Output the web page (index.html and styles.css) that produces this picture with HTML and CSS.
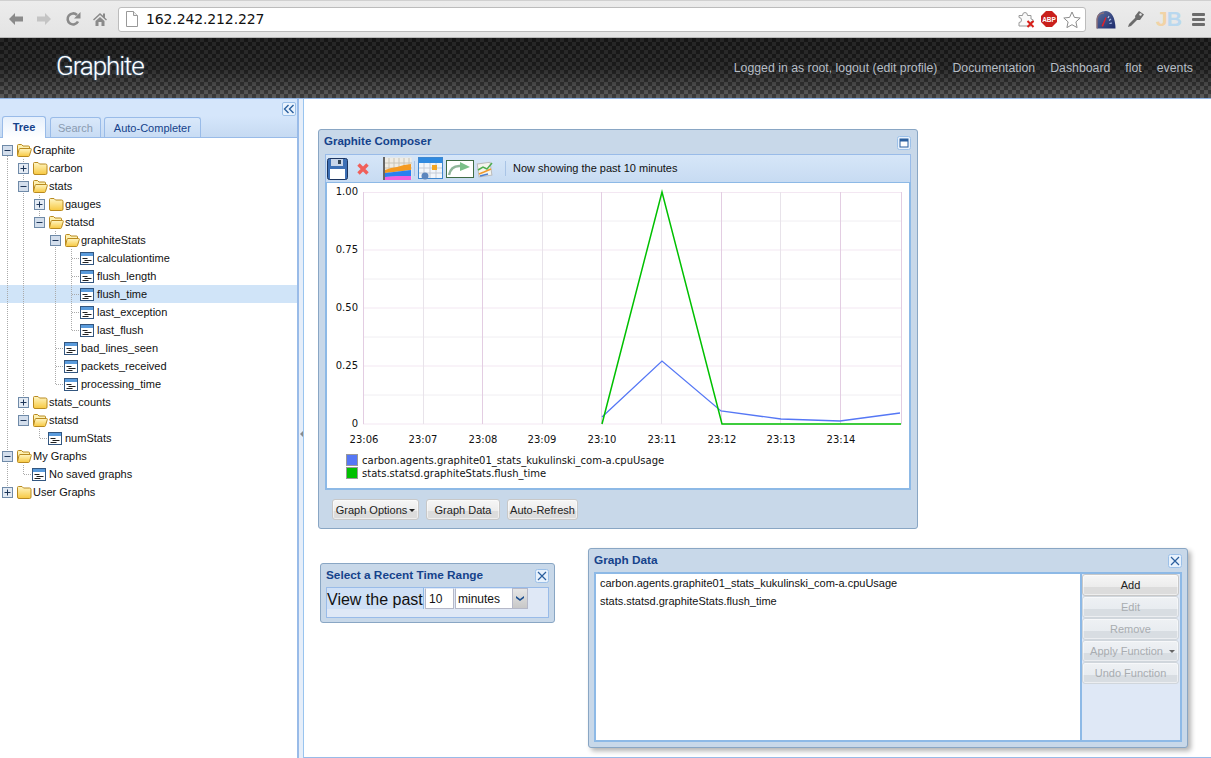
FILE: index.html
```html
<!DOCTYPE html>
<html lang="en">
<head>
<meta charset="utf-8">
<title>Graphite</title>
<link rel="stylesheet" href="styles.css">
</head>
<body>
<svg class="defs" width="0" height="0">
  <defs>
    <linearGradient id="fold" x1="0" y1="0" x2="0" y2="1"><stop offset="0" stop-color="#fff6c4"/><stop offset="1" stop-color="#f7c840"/></linearGradient>
    <linearGradient id="dial" x1="0" y1="0" x2="1" y2="1"><stop offset="0" stop-color="#5d6f9e"/><stop offset="1" stop-color="#1b2a6b"/></linearGradient>
    <symbol id="closed" viewBox="0 0 16 16"><path d="M1.500 13V3.500q0-1 1-1h3.500l1.500 1.500h6q1.500 0 1.500 1.500V13q0 1.500-1.500 1.500H3q-1.500 0-1.500-1.500z" fill="url(#fold)" stroke="#b98a20"/></symbol>
    <symbol id="open" viewBox="0 0 16 16"><path d="M1.500 13V3.500q0-1 1-1h3l1.500 1.500h5.500q1 0 1 1V7" fill="#fdf0b0" stroke="#b98a20"/><path d="M1.500 13.500L3 7.500q.3-1 1-1h10.500q1 0 .8 1L13.500 13.500q-.3 1-1 1H2.500q-1 0-1-1z" fill="url(#fold)" stroke="#b98a20"/></symbol>
    <symbol id="leaf" viewBox="0 0 16 16"><rect x=".5" y="2.500" width="13" height="12" fill="#fff" stroke="#33567f"/><rect x="1" y="3" width="12" height="3" fill="#5a9bdc"/><path d="M2.500 8.500h5M4.500 10.500h7M2.500 12.500h6" stroke="#222" fill="none"/></symbol>
    <symbol id="plus" viewBox="0 0 11 11"><rect x=".5" y=".5" width="10" height="10" fill="#e4ebf4" stroke="#6f8aa8"/><path d="M2.500 5.500h6M5.500 2.500v6" stroke="#1d3558"/></symbol>
    <symbol id="minus" viewBox="0 0 11 11"><rect x=".5" y=".5" width="10" height="10" fill="#d3deec" stroke="#6f8aa8"/><path d="M2.500 5.500h6" stroke="#1d3558"/></symbol>
    <symbol id="closex" viewBox="0 0 14 14"><rect x=".5" y=".5" width="13" height="13" rx="2" fill="#e8f2fd" stroke="#9cc0e8"/><path d="M3 3l8 8M11 3l-8 8" stroke="#2b5f9e" stroke-width="1.200"/></symbol>
  </defs>
</svg>

<div class="chrome">
  <svg class="nav-ic back" width="16" height="14" viewBox="0 0 16 14"><path d="M1 7l6-6v3.500h8v5H7V13z" fill="#8a8a8a"/></svg>
  <svg class="nav-ic fwd" width="16" height="14" viewBox="0 0 16 14"><path d="M15 7L9 1v3.500H1v5h8V13z" fill="#c4c4c4"/></svg>
  <svg class="nav-ic reload" width="16" height="16" viewBox="0 0 16 16"><path d="M13 10.500A5.500 5.500 0 1 1 12 4" fill="none" stroke="#8a8a8a" stroke-width="2.600"/><path d="M15.500 1v6.500H9z" fill="#8a8a8a"/></svg>
  <svg class="nav-ic home" width="14" height="14" viewBox="0 0 14 14"><path d="M0 7.500L7 1l3 2.800V1.500h2v4.200L14 7.500l-1 1L7 3 1 8.500zM2.500 9L7 5l4.500 4v5h-3V10h-3v4h-3z" fill="#8a8a8a"/></svg>
  <div class="omnibox">
    <svg class="page-ic" width="12" height="16" viewBox="0 0 12 16"><path d="M.5.500h7l4 4v11H.5z" fill="#fff" stroke="#999"/><path d="M7.500.500v4h4" fill="#eee" stroke="#999"/></svg>
    <span class="url">162.242.212.227</span>
    <span class="omni-right">
      <svg width="17" height="17" viewBox="0 0 17 17"><path d="M1 4.500h3.500q0-3 2.500-3t2.500 3H13v3.500q2.500 0 2.500 2.500H13V15H1v-3.500q2.500 0 2.500-2.500T1 6.500z" fill="#fafafa" stroke="#999"/><path d="M9.500 10l6 6M15.500 10l-6 6" stroke="#d8201a" stroke-width="2"/></svg>
      <svg width="16" height="16" viewBox="0 0 16 16"><path d="M5 0h6l5 5v6l-5 5H5l-5-5V5z" fill="#c9201c"/><text x="8" y="10.800" class="abp">ABP</text></svg>
      <svg width="18" height="17" viewBox="0 0 18 17"><path d="M9 1l2.400 5.400 5.800.6-4.300 3.900 1.200 5.700L9 13.700l-5.100 2.900 1.200-5.700L.8 7l5.800-.6z" fill="#fff" stroke="#8c8c8c"/></svg>
    </span>
  </div>
  <div class="ext">
    <svg width="20" height="19" viewBox="0 0 20 19"><path d="M1 18.500V8Q2 1 10 1q9 1 9.500 17.500z" fill="url(#dial)"/><path d="M1 18.500V9q1-6 7-6" fill="none" stroke="#8a6f7a" stroke-width="1.500"/><path d="M5.500 16l4-9 1 .7-3.500 9z" fill="#e0202c"/><path d="M13 6l-1 2M15 9l-2 1.500M16 13l-2.500.5" stroke="#b0c0e8" stroke-width="1.200"/></svg>
    <svg width="18" height="18" viewBox="0 0 18 18"><path d="M1 17l1-3 7-7 2 2-7 7z" fill="#6b6b6b"/><path d="M8 6l4-5 5 3.500-4 5.500H9z" fill="#6b6b6b"/><circle cx="13.500" cy="4.500" r="1.200" fill="#e8e8e8"/></svg>
    <span class="jb"><span class="jb-j">J</span><span class="jb-b">B</span></span>
    <span class="burger"><i></i><i></i><i></i></span>
  </div>
</div>

<header class="topbar">
  <span class="logo">Graphite</span>
  <nav class="links">
    <a>Logged in as root, logout (edit profile)</a>
    <a>Documentation</a>
    <a>Dashboard</a>
    <a>flot</a>
    <a>events</a>
  </nav>
</header>

<div class="workspace">
  <aside class="sidebar">
    <div class="side-head">
      <span class="collapse"><svg width="12" height="10" viewBox="0 0 12 10"><path d="M5.500 1l-4 4 4 4M10.500 1l-4 4 4 4" fill="none" stroke="#2b5f9e" stroke-width="1.400"/></svg></span>
    </div>
    <div class="tabs">
      <span class="tab active">Tree</span>
      <span class="tab off">Search</span>
      <span class="tab">Auto-Completer</span>
    </div>
    <div class="tree">
      <div class="row"><i class="c lb"><svg class="x"><use href="#minus"/></svg></i><svg class="f"><use href="#open"/></svg><span>Graphite</span></div>
      <div class="row"><i class="c l"></i><i class="c l"><svg class="x"><use href="#plus"/></svg></i><svg class="f"><use href="#closed"/></svg><span>carbon</span></div>
      <div class="row"><i class="c l"></i><i class="c l"><svg class="x"><use href="#minus"/></svg></i><svg class="f"><use href="#open"/></svg><span>stats</span></div>
      <div class="row"><i class="c l"></i><i class="c l"></i><i class="c l"><svg class="x"><use href="#plus"/></svg></i><svg class="f"><use href="#closed"/></svg><span>gauges</span></div>
      <div class="row"><i class="c l"></i><i class="c l"></i><i class="c lt"><svg class="x"><use href="#minus"/></svg></i><svg class="f"><use href="#open"/></svg><span>statsd</span></div>
      <div class="row"><i class="c l"></i><i class="c l"></i><i class="c"></i><i class="c l"><svg class="x"><use href="#minus"/></svg></i><svg class="f"><use href="#open"/></svg><span>graphiteStats</span></div>
      <div class="row"><i class="c l"></i><i class="c l"></i><i class="c"></i><i class="c l"></i><i class="c e"></i><svg class="f"><use href="#leaf"/></svg><span>calculationtime</span></div>
      <div class="row"><i class="c l"></i><i class="c l"></i><i class="c"></i><i class="c l"></i><i class="c e"></i><svg class="f"><use href="#leaf"/></svg><span>flush_length</span></div>
      <div class="row selected"><i class="c l"></i><i class="c l"></i><i class="c"></i><i class="c l"></i><i class="c e"></i><svg class="f"><use href="#leaf"/></svg><span>flush_time</span></div>
      <div class="row"><i class="c l"></i><i class="c l"></i><i class="c"></i><i class="c l"></i><i class="c e"></i><svg class="f"><use href="#leaf"/></svg><span>last_exception</span></div>
      <div class="row"><i class="c l"></i><i class="c l"></i><i class="c"></i><i class="c l"></i><i class="c z"></i><svg class="f"><use href="#leaf"/></svg><span>last_flush</span></div>
      <div class="row"><i class="c l"></i><i class="c l"></i><i class="c"></i><i class="c e"></i><svg class="f"><use href="#leaf"/></svg><span>bad_lines_seen</span></div>
      <div class="row"><i class="c l"></i><i class="c l"></i><i class="c"></i><i class="c e"></i><svg class="f"><use href="#leaf"/></svg><span>packets_received</span></div>
      <div class="row"><i class="c l"></i><i class="c l"></i><i class="c"></i><i class="c z"></i><svg class="f"><use href="#leaf"/></svg><span>processing_time</span></div>
      <div class="row"><i class="c l"></i><i class="c l"><svg class="x"><use href="#plus"/></svg></i><svg class="f"><use href="#closed"/></svg><span>stats_counts</span></div>
      <div class="row"><i class="c l"></i><i class="c lt"><svg class="x"><use href="#minus"/></svg></i><svg class="f"><use href="#open"/></svg><span>statsd</span></div>
      <div class="row"><i class="c l"></i><i class="c"></i><i class="c z"></i><svg class="f"><use href="#leaf"/></svg><span>numStats</span></div>
      <div class="row"><i class="c l"><svg class="x"><use href="#minus"/></svg></i><svg class="f"><use href="#open"/></svg><span>My Graphs</span></div>
      <div class="row"><i class="c l"></i><i class="c z"></i><svg class="f"><use href="#leaf"/></svg><span>No saved graphs</span></div>
      <div class="row"><i class="c lt"><svg class="x"><use href="#plus"/></svg></i><svg class="f"><use href="#closed"/></svg><span>User Graphs</span></div>
    </div>
  </aside>
  <div class="splitter"><i class="grip"></i></div>

  <main class="canvas">
    <section class="win composer">
      <div class="win-title"><span>Graphite Composer</span>
        <svg class="tool-btn" width="14" height="14" viewBox="0 0 14 14"><rect x=".5" y=".5" width="13" height="13" rx="2" fill="#e8f2fd" stroke="#9cc0e8"/><rect x="3" y="3" width="8" height="8" fill="#fff" stroke="#2b5f9e"/><rect x="3" y="3" width="8" height="2.500" fill="#2b5f9e"/></svg>
      </div>
      <div class="toolbar">
        <svg width="21" height="22" viewBox="0 0 21 22"><rect x=".5" y=".5" width="20" height="21" rx="2" fill="#3c6fb5" stroke="#1c3560"/><rect x="4" y="1" width="12" height="7" fill="#c8d6ea"/><rect x="11" y="2" width="3" height="4" fill="#345"/><rect x="3" y="11" width="15" height="10" fill="#fff"/></svg>
        <svg class="tb-x" width="14" height="14" viewBox="0 0 14 14"><path d="M2.500 2.500l9 9M11.500 2.500l-9 9" stroke="#f0605a" stroke-width="3.400"/></svg>
        <svg class="tb-g" width="29" height="23" viewBox="0 0 29 23"><rect x=".5" y=".5" width="28" height="22" fill="#efece4"/><path d="M6 1v20M11 1v20M16 1v20M21 1v20M26 1v20M2 6h27M2 11h27" stroke="#c8c4b8"/><path d="M1 0v23" stroke="#666" stroke-width="2"/><path d="M2 13l6-2 6-1 7-2 7-1v6l-26 3z" fill="#f59a20"/><path d="M2 16l26-3v6L2 20z" fill="#2a80f0"/><path d="M2 20l13-1 13 0v4H2z" fill="#f060e0"/></svg>
        <i class="tb-sep s1"></i>
        <svg class="tb-cal" width="25" height="23" viewBox="0 0 25 23"><rect x=".5" y=".5" width="24" height="21" fill="#f2f6fb" stroke="#3f87cf"/><rect x="1" y="1" width="23" height="5" fill="#2f8ae0"/><path d="M6 6v15M12 6v15M18 6v15M1 11h23M1 16h23" stroke="#c6ccd6"/><rect x="14" y="8" width="5" height="5" fill="#f5a623"/><circle cx="7" cy="19" r="3.500" fill="#5c86bd"/></svg>
        <svg class="tb-a" width="28" height="18" viewBox="0 0 28 18"><rect x=".5" y=".5" width="27" height="17" fill="#fff" stroke="#3f6b45"/><path d="M3 15q2-10 12-9" fill="none" stroke="#8fb59a" stroke-width="2.500"/><path d="M14 2l10 5-10 4z" fill="#7bc08a"/></svg>
        <svg class="tb-o" width="18" height="18" viewBox="0 0 18 18"><rect x="2" y="3" width="13" height="13" fill="#f4f4ee" stroke="#bbb" transform="rotate(-8 9 9)"/><path d="M2 10l5-3 4 2 5-6" fill="none" stroke="#4fae4f" stroke-width="1.500"/><path d="M3 14l5-2 7-3" stroke="#f09a2a" stroke-width="1.500"/><path d="M4 16l8-2" stroke="#4a7fd0" stroke-width="1.500"/></svg>
        <i class="tb-sep s2"></i>
        <span class="tb-text">Now showing the past 10 minutes</span>
      </div>
      <div class="chart">
        <svg class="plot" width="582" height="306" viewBox="327 183 582 306">
          <g class="gy">
            <path d="M363 221h539M363 279h539M363 337h539M363 395h539"/>
          </g>
          <g class="gy2">
            <path d="M363 192.500h539M363 250h539M363 308h539M363 366h539M363 424h539"/>
          </g>
          <g class="gv">
            <path d="M423.500 192v232M542.500 192v232M661.500 192v232M780.500 192v232"/>
          </g>
          <g class="gv2">
            <path d="M363.500 192v232M482.500 192v232M601.500 192v232M721.500 192v232M840.500 192v232M901.500 192v232"/>
          </g>
          <polyline class="s-blue" points="602,417 662,361 721,411 781,419 840,421 900,413"/>
          <polyline class="s-green" points="602,424 662,192 722,424 901,424"/>
          <g class="yt">
            <text x="358" y="195">1.00</text>
            <text x="358" y="253">0.75</text>
            <text x="358" y="311">0.50</text>
            <text x="358" y="369">0.25</text>
            <text x="358" y="427">0</text>
          </g>
          <g class="xt">
            <text x="364" y="443">23:06</text>
            <text x="423" y="443">23:07</text>
            <text x="483" y="443">23:08</text>
            <text x="542" y="443">23:09</text>
            <text x="602" y="443">23:10</text>
            <text x="662" y="443">23:11</text>
            <text x="722" y="443">23:12</text>
            <text x="781" y="443">23:13</text>
            <text x="841" y="443">23:14</text>
          </g>
          <rect class="lg-b" x="346.500" y="454.500" width="11" height="11"/>
          <rect class="lg-g" x="346.500" y="467.500" width="11" height="11"/>
          <text class="lg" x="362" y="464">carbon.agents.graphite01_stats_kukulinski_com-a.cpuUsage</text>
          <text class="lg" x="362" y="477">stats.statsd.graphiteStats.flush_time</text>
        </svg>
      </div>
      <div class="win-foot">
        <button class="btn opt">Graph Options<i class="caret"></i></button>
        <button class="btn gd">Graph Data</button>
        <button class="btn ar">Auto-Refresh</button>
      </div>
    </section>

    <section class="win range">
      <div class="win-title"><span>Select a Recent Time Range</span><svg class="tool-btn"><use href="#closex"/></svg></div>
      <div class="range-body">
        <div class="range-row">
          <span class="past">View the past</span>
          <span class="field num">10</span>
          <span class="field combo">minutes</span>
          <span class="trigger"><svg width="8" height="5" viewBox="0 0 8 5"><path d="M0 0l4 3 4-3v2L4 5 0 2z" fill="#1d4f8f"/></svg></span>
        </div>
      </div>
    </section>

    <section class="win data">
      <div class="win-title"><span>Graph Data</span><svg class="tool-btn"><use href="#closex"/></svg></div>
      <div class="data-body">
        <div class="targets">
          <div>carbon.agents.graphite01_stats_kukulinski_com-a.cpuUsage</div>
          <div>stats.statsd.graphiteStats.flush_time</div>
        </div>
        <div class="actions">
          <button class="btn wide">Add</button>
          <button class="btn wide dis">Edit</button>
          <button class="btn wide dis">Remove</button>
          <button class="btn wide dis fn">Apply Function<i class="caret"></i></button>
          <button class="btn wide dis">Undo Function</button>
        </div>
      </div>
    </section>
  </main>
</div>
</body>
</html>
```
FILE: styles.css
```css
* { box-sizing: border-box; }
html, body { margin: 0; height: 100%; }
body {
  width: 1211px;
  height: 758px;
  overflow: hidden;
  display: flex;
  flex-direction: column;
  font: 11px "Liberation Sans", Arial, sans-serif;
  color: #111;
  background: #fff;
}
.defs { position: absolute; }

/* browser chrome */
.chrome {
  height: 38px;
  flex: none;
  display: flex;
  align-items: center;
  padding: 0 6px 0 8px;
  background: linear-gradient(#ececec, #e4e4e4);
  border-top: 1px solid #d0d0d0;
  border-bottom: 1px solid #b8b8b8;
}
.nav-ic { flex: none; }
.fwd { margin-left: 12px; }
.reload { margin-left: 13px; }
.home { margin-left: 12px; }
.omnibox {
  margin-left: 11px;
  width: 968px;
  height: 25px;
  flex: none;
  display: flex;
  align-items: center;
  padding: 0 4px 0 7px;
  background: #fff;
  border: 1px solid #bcbcbc;
  border-radius: 3px;
}
.url {
  margin-left: 8px;
  font: 14px "DejaVu Sans", sans-serif;
  letter-spacing: -.13px;
  color: #111;
}
.omni-right {
  margin-left: auto;
  display: flex;
  align-items: center;
  gap: 6px;
}
.abp { font: bold 6.500px "Liberation Sans", sans-serif; fill: #fff; text-anchor: middle; }
.ext {
  margin-left: 10px;
  flex: 1;
  display: flex;
  align-items: center;
  justify-content: space-between;
}
.jb { font: bold 21px "Liberation Sans", sans-serif; letter-spacing: -1px; }
.jb-j { color: #f2d3a6; }
.jb-b { color: #b9d8ef; }
.burger { width: 13px; display: flex; flex-direction: column; gap: 2px; }
.burger i { height: 3px; background: #6c6c6c; border-radius: 1px; }

/* site header */
.topbar {
  height: 60px;
  flex: none;
  display: flex;
  align-items: center;
  justify-content: space-between;
  padding: 0 18px 0 56px;
  background:
    repeating-conic-gradient(rgba(0,0,0,.3) 0 25%, rgba(255,255,255,.03) 0 50%) 0 0 / 8px 8px,
    linear-gradient(#1e1e1e, #262626 50%, #565656);
}
.logo {
  font: 300 26px Roboto, sans-serif;
  letter-spacing: -1.1px;
  color: #fff;
  text-shadow: 0 0 2px #6fa8dc;
  margin-top: -4px;
}
.links { display: flex; gap: 15px; }
.links a { font-size: 12.300px; color: #b6bec6; }

/* workspace */
.workspace { flex: 1; display: flex; min-height: 0; border-top: 1px solid #8db2e3; }
.sidebar {
  width: 299px;
  flex: none;
  display: flex;
  flex-direction: column;
  background: #fff;
  border-right: 2px solid #99bbe8;
}
.side-head {
  height: 17px;
  flex: none;
  display: flex;
  justify-content: flex-end;
  padding: 3px 1px 0 0;
  background: #d5e6fb;
}
.collapse {
  width: 14px;
  height: 14px;
  display: flex;
  align-items: center;
  justify-content: center;
  background: #e8f2fd;
  border: 1px solid #9cc0e8;
  border-radius: 2px;
}
.tabs {
  height: 22px;
  flex: none;
  display: flex;
  align-items: flex-end;
  gap: 3px;
  padding-left: 2px;
  background: linear-gradient(#d5e6fb, #c6daf2);
  border-bottom: 1px solid #99bbe8;
}
.tab {
  height: 20px;
  line-height: 20px;
  padding: 0 9px;
  color: #15428b;
  background: linear-gradient(#d9e8fa, #c8dcf4);
  border: 1px solid #99bbe8;
  border-bottom: 0;
  border-radius: 3px 3px 0 0;
}
.tab.active {
  height: 22px;
  line-height: 21px;
  width: 44px;
  padding: 0;
  text-align: center;
  margin-bottom: -1px;
  margin-right: 1px;
  font-weight: bold;
  background: linear-gradient(#e6f0fc, #fff);
}
.tab.off { color: #8a9bb0; padding: 0 7px; }
.tree { flex: 1; padding-top: 3px; }
.row { height: 18px; display: flex; align-items: center; color: #111; }
.row.selected { background: #d0e4f8; }
.row span { margin-left: 1px; line-height: 18px; }
.c {
  width: 16px;
  height: 18px;
  flex: none;
  display: flex;
  align-items: center;
  padding-left: 2px;
}
.l, .e {
  background: repeating-linear-gradient(#aaa 0 1px, transparent 1px 2px) 7px 0 / 1px 18px no-repeat;
}
.lb {
  background: repeating-linear-gradient(#aaa 0 1px, transparent 1px 2px) 7px 9px / 1px 9px no-repeat;
}
.lt, .z {
  background: repeating-linear-gradient(#aaa 0 1px, transparent 1px 2px) 7px 0 / 1px 10px no-repeat;
}
.e, .z { position: relative; }
.e::after, .z::after {
  content: "";
  position: absolute;
  left: 8px;
  top: 9px;
  width: 8px;
  height: 1px;
  background: repeating-linear-gradient(90deg, #aaa 0 1px, transparent 1px 2px);
}
.x { width: 11px; height: 11px; display: block; background: #fff; }
.f { width: 16px; height: 16px; flex: none; display: block; }
.splitter {
  width: 5px;
  flex: none;
  display: flex;
  align-items: center;
  justify-content: center;
  background: #e6eef9;
  border-right: 1px solid #99c4ef;
  padding-top: 10px;
}
.grip {
  width: 0;
  height: 0;
  border: 3.500px solid transparent;
  border-left: 0;
  border-right: 3px solid #8a8a8a;
}

/* free canvas of windows */
.canvas {
  flex: 1;
  position: relative;
  background: #fff;
  border-bottom: 1px solid #99bbe8;
}
.win {
  position: absolute;
  display: flex;
  flex-direction: column;
  background: #c8d8e9;
  border: 1px solid #89a6c4;
  border-radius: 3px;
  padding: 0 5px;
}
.win-title {
  display: flex;
  align-items: center;
  justify-content: space-between;
  flex: none;
  font-weight: bold;
  font-size: 11.800px;
  color: #15428b;
}
.tool-btn { width: 14px; height: 14px; flex: none; }
.composer { left: 14px; top: 30px; width: 600px; height: 400px; padding: 0 6px; }
.composer .win-title { height: 24px; padding-top: 1px; font-size: 11.500px; }
.composer .win-title span { margin-bottom: 4px; margin-left: -1px; }
.toolbar {
  height: 28px;
  flex: none;
  display: flex;
  align-items: center;
  padding-left: 1px;
  background: linear-gradient(#d6e6f8, #c7dbf2);
  border: 1px solid #99bbe8;
  border-bottom: 0;
}
.tb-x { margin-left: 8px; }
.tb-g { margin-left: 13px; }
.tb-sep { width: 1px; height: 15px; background: #a9c4e6; flex: none; }
.s1 { margin-left: 2px; }
.tb-cal { margin-left: 3px; }
.tb-a { margin-left: 3px; }
.tb-o { margin-left: 2px; }
.s2 { margin-left: 11px; }
.tb-text { margin-left: 7px; margin-bottom: 2px; color: #111; }
.chart {
  height: 308px;
  flex: none;
  background: #fff;
  border: 2px solid #8db9e6;
  border-top-width: 1px;
  overflow: hidden;
}
.plot { display: block; }
.gy path { stroke: #f0eef2; stroke-width: 1; fill: none; }
.gy2 path { stroke: #f3e7f2; stroke-width: 1; fill: none; }
.gv path { stroke: #e8e3ea; stroke-width: 1; fill: none; }
.gv2 path { stroke: #e3cde2; stroke-width: 1; fill: none; }
.s-blue { fill: none; stroke: #5577f5; stroke-width: 1.300; }
.s-green { fill: none; stroke: #00c000; stroke-width: 1.500; }
.yt text, .xt text, .lg { font: 10px "DejaVu Sans", sans-serif; fill: #111; }
.yt text { text-anchor: end; }
.xt text { text-anchor: middle; }
.lg-b { fill: #5577f5; stroke: #999; }
.lg-g { fill: #00c000; stroke: #999; }
.win-foot { display: flex; padding: 9px 0 0 7px; }
.btn {
  height: 22px;
  padding: 0;
  font: 11px "Liberation Sans", Arial, sans-serif;
  color: #222;
  background: linear-gradient(#f6f6f6, #ececec 60%, #dcdcdc 60%, #dcdcdc);
  border: 1px solid #c8c8c8;
  border-radius: 3px;
  box-shadow: inset 0 0 0 1px rgba(255,255,255,.5);
}
.win-foot .btn { height: 21px; }
.opt { width: 87px; }
.gd { width: 74px; margin-left: 7px; }
.ar { width: 71px; margin-left: 7px; }
.caret {
  display: inline-block;
  margin-left: 2px;
  vertical-align: 2px;
  border: 3px solid transparent;
  border-top-color: #222;
  border-bottom: 0;
}

.range { left: 16px; top: 464px; width: 235px; height: 60px; }
.range .win-title { height: 23px; }
.range .win-title span { margin-bottom: 2px; }
.range-body {
  height: 31px;
  flex: none;
  background: #dfe8f6;
  border: 1px solid #99bbe8;
}
.range-row { display: flex; align-items: stretch; height: 21px; }
.past {
  width: 97px;
  font-size: 16px;
  line-height: 23px;
  color: #111;
  white-space: nowrap;
  background: #cfe0f6;
  border-right: 1px solid #8db9e6;
}
.field {
  background: #fff;
  border: 1px solid #b5b8c8;
  font-size: 12px;
  line-height: 21px;
  padding-left: 3px;
  border-top-color: #dfe8f6;
}
.num { width: 29px; margin-left: 1px; }
.combo { width: 57px; margin-left: 1px; border-right: 0; padding-left: 2px; }
.trigger {
  width: 16px;
  display: flex;
  align-items: center;
  justify-content: center;
  background: linear-gradient(#e6e6e6, #c8c8c8);
  border: 1px solid #b5b8c8;
}

.data { left: 284px; top: 449px; width: 600px; height: 200px; box-shadow: 3px 3px 5px rgba(0,0,0,.3); }
.data .win-title { height: 23px; }
.data .win-title span { margin-bottom: 2px; }
.data-body {
  height: 170px;
  flex: none;
  display: flex;
  background: #dfe8f6;
  border: 2px solid #8db9e6;
}
.targets {
  width: 486px;
  flex: none;
  padding: 0 4px;
  background: #fff;
  border-right: 2px solid #8db9e6;
}
.targets div { height: 18px; line-height: 18px; }
.actions { flex: 1; display: flex; flex-direction: column; padding: 0 1px 0 0; }
.wide { width: 97px; }
.dis { color: #a8acb0; background: linear-gradient(#eef1f4, #e8ecf0 60%, #d8dde2 60%); border-color: #d0d6dc; }
.dis .caret { border-top-color: #666; margin-left: 6px; }
.fn { padding-left: 4px; }
```
